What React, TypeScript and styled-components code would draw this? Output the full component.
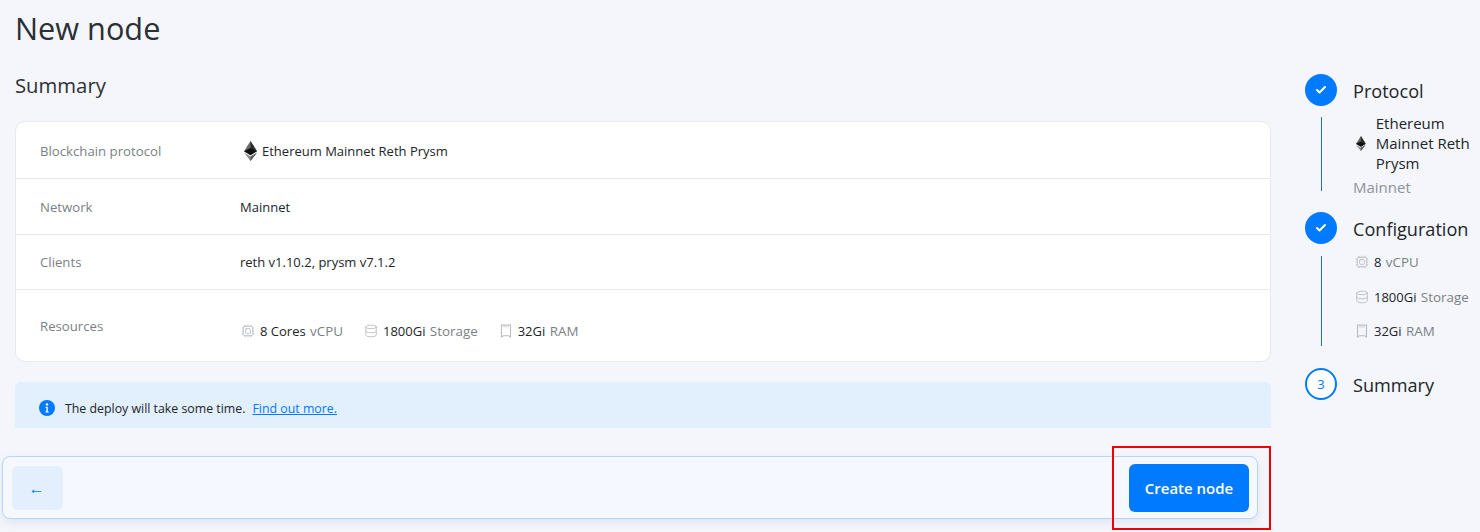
import React from "react";
import styled, { createGlobalStyle } from "styled-components";
import { Cpu, Database, Check } from "lucide-react";

const Global = createGlobalStyle`
  html, body { margin: 0; padding: 0; background: #f4f6fb; }
  body { font-family: "Open Sans", "Noto Sans", "Liberation Sans", sans-serif; color: #212529; }
  * { box-sizing: border-box; }
`;

const Page = styled.div`
  position: relative;
  width: 1480px;
  height: 532px;
  overflow: hidden;
  display: flex;
  background: #f4f6fb;
`;

const Main = styled.main`
  width: 1271px;
  padding-left: 15px;
  flex: none;
  display: flex;
  flex-direction: column;
`;

const Title = styled.h1`
  margin: 8px 0 0;
  font-size: 30.7px;
  line-height: 40px;
  font-weight: 400;
  color: #2b3035;
`;

const Subtitle = styled.h2`
  margin: 23px 0 0;
  font-size: 20.3px;
  line-height: 28px;
  font-weight: 400;
  color: #2b3035;
`;

const Card = styled.section`
  margin-top: 22px;
  background: #fff;
  border: 1px solid #e7e9ee;
  border-radius: 10px;
`;

const Row = styled.div<{ $h: number; $pt?: number; $last?: boolean }>`
  height: ${(p) => p.$h}px;
  display: flex;
  align-items: center;
  padding: ${(p) => p.$pt ?? 0}px 0 0 24px;
  border-bottom: ${(p) => (p.$last ? "none" : "1px solid #e7e9ee")};
`;

const Label = styled.div`
  width: 200px;
  flex: none;
  font-size: 13.2px;
  color: #7b7f85;
`;

const Value = styled.div`
  display: flex;
  align-items: center;
  font-size: 13px;
  color: #212529;
`;

const EthWrap = styled.span`
  display: inline-flex;
  width: 22px;
  padding-left: 4px;
`;

const Resources = styled.div`
  display: flex;
  align-items: center;
  gap: 21px;
  font-size: 13px;
  margin: 10px 0 0 1px;
`;

const Resource = styled.span`
  display: inline-flex;
  align-items: center;
  gap: 5px;
  color: #212529;
`;

const Amount = styled.span`
  white-space: pre;
`;

const Muted = styled.span`
  color: #7b7f85;
  font-size: 13.4px;
  margin-left: 1px;
`;

const Alert = styled.div`
  margin-top: 20px;
  height: 46px;
  background: #e2effd;
  border-radius: 6px 6px 0 0;
  display: flex;
  align-items: center;
  padding: 6px 0 0 24px;
  font-size: 12.35px;
  color: #212529;
  gap: 10px;
`;

const AlertLink = styled.a`
  color: #007bff;
  text-decoration: underline;
  margin-left: -3px;
`;

const Footer = styled.footer`
  margin: 28px 13px 0 -13px;
  height: 63px;
  background: #f5f8fe;
  border: 1px solid #b3d7fc;
  border-radius: 8px;
  box-shadow: 0 4px 10px rgba(60, 80, 120, 0.1);
  display: flex;
  justify-content: space-between;
  align-items: center;
  padding: 0 8px 0 9px;
`;

const BackButton = styled.button`
  width: 51px;
  height: 44px;
  border: none;
  border-radius: 6px;
  background: #e3effd;
  color: #007bff;
  font-family: inherit;
  font-size: 16px;
  padding: 0 2px 0 0;
`;

const CreateButton = styled.button`
  width: 120px;
  height: 48px;
  border: none;
  border-radius: 6px;
  background: #007bff;
  color: #fff;
  font-family: inherit;
  font-size: 15px;
  font-weight: 600;
`;

const Side = styled.aside`
  padding: 74px 0 0 34px;
  flex: 1;
  min-width: 0;
`;

const StepHead = styled.div`
  display: flex;
  align-items: center;
  gap: 16px;
  height: 32px;
  font-size: 18.1px;
  color: #212529;
  white-space: nowrap;
`;

const StepName = styled.span`
  padding-top: 2px;
`;

const Circle = styled.div<{ $done?: boolean }>`
  width: 32px;
  height: 32px;
  flex: none;
  border-radius: 50%;
  display: flex;
  align-items: center;
  justify-content: center;
  background: ${(p) => (p.$done ? "#007bff" : "#fff")};
  border: 2px solid #007bff;
  color: ${(p) => (p.$done ? "#fff" : "#007bff")};
  font-size: 13px;
`;

const StepBody = styled.div<{ $h: number; $mt: number; $mb: number }>`
  display: flow-root;
  margin: ${(p) => p.$mt}px 0 ${(p) => p.$mb}px 16px;
  height: ${(p) => p.$h}px;
  border-left: 1px solid #1f6fd0;
  padding-left: 31px;
`;

const ProtoRow = styled.div`
  display: flex;
  align-items: center;
  gap: 10px;
  margin-left: 3px;
  margin-top: -4px;
  font-size: 15px;
  line-height: 20px;
  color: #212529;
`;

const ProtoName = styled.div`
  width: 100px;
  white-space: normal;
`;

const Network = styled.div`
  font-size: 15px;
  line-height: 20px;
  color: #8f9399;
  margin-top: 4px;
`;

const SideList = styled.div`
  margin-left: 2px;
  margin-top: -4px;
  display: flex;
  flex-direction: column;
  gap: 14.5px;
  font-size: 13px;
  line-height: 20px;
`;

const SideItem = styled.div`
  display: flex;
  align-items: center;
  gap: 5px;
  white-space: nowrap;
  color: #212529;
`;

const Highlight = styled.div`
  position: absolute;
  left: 1112px;
  top: 446px;
  width: 159px;
  height: 84px;
  border: 2px solid #f00000;
  pointer-events: none;
`;

const EthIcon = ({ size = 20 }: { size?: number }) => (
  <svg width={size * 0.65} height={size} viewBox="0 0 14 20" preserveAspectRatio="none" aria-hidden="true">
    <path d="M7 0 0 10.2 7 14.2 14 10.2Z" fill="#6a6a6a" />
    <path d="M7 0 7 7 14 10.2 Z" fill="#2a2a2a" />
    <path d="M7 7 0 10.2 7 14.2 14 10.2Z" fill="#111" />
    <path d="M0 11.6 7 20 14 11.6 7 15.6Z" fill="#8c8c8c" />
    <path d="M7 15.6 7 20 14 11.6Z" fill="#5c5c5c" />
  </svg>
);

const InfoIcon = () => (
  <svg width="16" height="16" viewBox="0 0 16 16" aria-hidden="true">
    <circle cx="8" cy="8" r="8" fill="#007bff" />
    <circle cx="8" cy="4.4" r="1.2" fill="#fff" />
    <path d="M6.6 6.8h2.2v4.6h1v1.1H6.4v-1.1h1V7.9h-.8z" fill="#fff" />
  </svg>
);

const iconColor = "#b9bcc1";

const CpuIcon = () => <Cpu size={14} color={iconColor} strokeWidth={1.5} />;
const DbIcon = () => <Database size={14} color={iconColor} strokeWidth={1.5} />;
const RamIcon = () => (
  <svg width="14" height="14" viewBox="0 0 14 14" fill="none" stroke={iconColor} strokeWidth="1.1" aria-hidden="true">
    <path d="M2.5 1h9v12l-2-1.3h-5l-2 1.3z" />
    <path d="M5 1v2.5M7 1v2.5M9 1v2.5" strokeWidth="0.8" />
  </svg>
);

export default function App() {
  return (
    <Page>
      <Global />
      <Main>
        <Title>New node</Title>
        <Subtitle>Summary</Subtitle>
        <Card>
          <Row $h={57} $pt={1}>
            <Label>Blockchain protocol</Label>
            <Value>
              <EthWrap><EthIcon /></EthWrap>
              Ethereum Mainnet Reth Prysm
            </Value>
          </Row>
          <Row $h={56}>
            <Label>Network</Label>
            <Value>Mainnet</Value>
          </Row>
          <Row $h={55}>
            <Label>Clients</Label>
            <Value>reth v1.10.2, prysm v7.1.2</Value>
          </Row>
          <Row $h={71} $last>
            <Label>Resources</Label>
            <Resources>
              <Resource><CpuIcon /><Amount>8 Cores <Muted>vCPU</Muted></Amount></Resource>
              <Resource><DbIcon /><Amount>1800Gi <Muted>Storage</Muted></Amount></Resource>
              <Resource><RamIcon /><Amount>32Gi <Muted>RAM</Muted></Amount></Resource>
            </Resources>
          </Row>
        </Card>
        <Alert>
          <InfoIcon />
          <span>The deploy will take some time.</span>
          <AlertLink href="#">Find out more.</AlertLink>
        </Alert>
        <Footer>
          <BackButton>←</BackButton>
          <CreateButton>Create node</CreateButton>
        </Footer>
      </Main>
      <Side>
        <StepHead>
          <Circle $done><Check size={12} strokeWidth={4} /></Circle>
          <StepName>Protocol</StepName>
        </StepHead>
        <StepBody $h={74} $mt={11} $mb={21}>
          <ProtoRow>
            <EthIcon size={15} />
            <ProtoName>Ethereum Mainnet Reth Prysm</ProtoName>
          </ProtoRow>
          <Network>Mainnet</Network>
        </StepBody>
        <StepHead>
          <Circle $done><Check size={12} strokeWidth={4} /></Circle>
          <StepName>Configuration</StepName>
        </StepHead>
        <StepBody $h={90} $mt={12} $mb={22}>
          <SideList>
            <SideItem><CpuIcon /><Amount>8 <Muted>vCPU</Muted></Amount></SideItem>
            <SideItem><DbIcon /><Amount>1800Gi <Muted>Storage</Muted></Amount></SideItem>
            <SideItem><RamIcon /><Amount>32Gi <Muted>RAM</Muted></Amount></SideItem>
          </SideList>
        </StepBody>
        <StepHead>
          <Circle>3</Circle>
          <StepName>Summary</StepName>
        </StepHead>
      </Side>
      <Highlight />
    </Page>
  );
}
